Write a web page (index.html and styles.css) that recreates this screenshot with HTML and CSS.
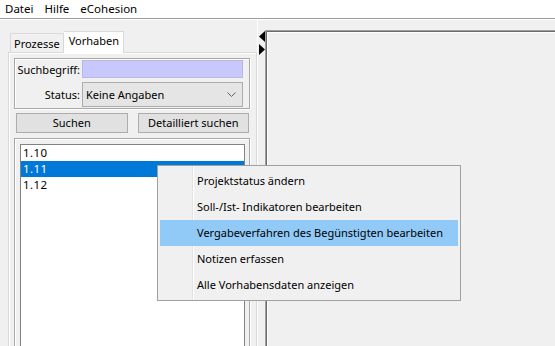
FILE: index.html
```html
<!DOCTYPE html>
<html lang="de">
<head>
    <meta charset="UTF-8">
    <title>eCohesion</title>
    <link rel="stylesheet" href="styles.css">
</head>
<body>
    <div class="menubar">
        <span>Datei</span>
        <span>Hilfe</span>
        <span>eCohesion</span>
    </div>
    <div class="main">
        <div class="left">
            <div class="tabs">
                <div class="tab">Prozesse</div>
                <div class="tab active">Vorhaben</div>
            </div>
            <div class="tabpanel">
                <div class="group search">
                    <label>Suchbegriff:</label>
                    <div class="input"></div>
                    <label>Status:</label>
                    <div class="combo">
                        <span>Keine Angaben</span>
                        <svg width="9" height="5" viewBox="0 0 9 5"><path d="M0.5 0.5 L4.5 4.5 L8.5 0.5" fill="none" stroke="#606060" stroke-width="1"/></svg>
                    </div>
                </div>
                <div class="buttons">
                    <div class="btn">Suchen</div>
                    <div class="btn">Detailliert suchen</div>
                </div>
                <div class="group listbox">
                    <div class="list">
                        <div class="row">1.10</div>
                        <div class="row selected">1.11</div>
                        <div class="row">1.12</div>
                    </div>
                </div>
            </div>
        </div>
        <div class="splitter">
            <svg width="6" height="11" viewBox="0 0 6 11"><polygon points="6,0 0,5.5 6,11" fill="#000"/></svg>
            <svg width="6" height="11" viewBox="0 0 6 11"><polygon points="0,0 6,5.5 0,11" fill="#000"/></svg>
        </div>
        <div class="right"></div>
    </div>

    <!-- Kontextmenü auf 1.11 -->
    <div class="context">
        <div class="item">Projektstatus ändern</div>
        <div class="item">Soll-/Ist- Indikatoren bearbeiten</div>
        <div class="item hover">Vergabeverfahren des Begünstigten bearbeiten</div>
        <div class="item">Notizen erfassen</div>
        <div class="item">Alle Vorhabensdaten anzeigen</div>
    </div>
</body>
</html>
```
FILE: styles.css
```css
body {
    margin: 0;
    background-color: #f0f0f0;
    font-family: "Noto Sans", "Open Sans", sans-serif;
    font-size: 11px;
    color: #000;
    overflow: hidden;
    height: 346px;
    white-space: nowrap;
}

/* Menüleiste */
.menubar {
    height: 18px;
    line-height: 17px;
    background-color: #fff;
    border-bottom: 1px solid #a0a0a0;
    display: flex;
    gap: 11px;
    padding-left: 5px;
    font-size: 11.5px;
}

.main {
    display: flex;
    border-top: 1px solid #fff;
    height: 326px;
}

/* linke Seite mit Reitern */
.left {
    width: 249px;
    padding: 11px 0 0 8px;
}

.tabs {
    display: flex;
    align-items: flex-end;
    height: 21px;
    padding-left: 2px;
    position: relative;
    z-index: 1;
}

.tab {
    height: 18px;
    line-height: 19px;
    padding: 0 3px 0 3px;
    border: 1px solid #d9d9d9;
    border-bottom: none;
    background-color: #f0f0f0;
}

.tab.active {
    height: 21px;
    line-height: 18px;
    background-color: #fff;
    margin-bottom: -1px;
    padding: 0 4px 0 5px;
    border-left: none;
}

.tabpanel {
    border: 1px solid #d9d9d9;
    border-bottom: none;
    box-shadow: inset 1px 1px 0 #fff;
    padding: 5px 6px 0 5px;
    height: 300px;
}

.group {
    border: 1px solid #a8a8a8;
    box-shadow: inset 1px 1px 0 #fff, 1px 1px 0 #fff;
}

.search {
    display: grid;
    grid-template-columns: 65px 1fr;
    column-gap: 2px;
    row-gap: 4px;
    padding: 1px 6px 1px 0;
    align-items: center;
}

.search label {
    text-align: right;
}

.input {
    height: 16px;
    background-color: #c8c8ff;
    border: 1px solid #b8b8e0;
}

.combo {
    height: 23px;
    background-color: #e5e5e5;
    border: 1px solid #adadad;
    display: flex;
    align-items: center;
    justify-content: space-between;
    padding: 0 6px 0 3px;
}

.buttons {
    display: flex;
    gap: 10px;
    padding: 0 1px 0 2px;
    margin: 4px 0 5px 0;
}

.btn {
    flex: 1;
    height: 18px;
    line-height: 18px;
    text-align: center;
    background-color: #e1e1e1;
    border: 1px solid #adadad;
}

.listbox {
    padding: 5px 4px 0 5px;
    height: 300px;
}

.list {
    background-color: #fff;
    border: 1px solid #828282;
    height: 300px;
}

.row {
    height: 16px;
    line-height: 16px;
    padding-left: 2px;
    letter-spacing: 0.4px;
    font-size: 11.5px;
}

.row.selected {
    background-color: #0078d7;
    color: #fff;
}

/* Teiler mit Pfeilen */
.splitter {
    border-left: 1px solid #fff;
    display: flex;
    flex-direction: column;
    gap: 2px;
    padding: 11px 0 0 1px;
    box-sizing: border-box;
    width: 8px;
}

.right {
    flex: 1;
    margin-top: 10px;
    border-top: 1px solid #a0a0a0;
    border-left: 1px solid #a0a0a0;
    box-shadow: inset 1px 1px 0 #696969, inset 2px 2px 0 #fff;
    background-color: #f0f0f0;
}

/* Kontextmenü */
.context {
    position: absolute;
    left: 157px;
    top: 165px;
    width: 298px;
    padding: 2px;
    border: 1px solid #a0a0a0;
    background-color: #f0f0f0;
    background-image: linear-gradient(to right, transparent 34px, #e3e3e3 34px, #e3e3e3 35px, #fff 35px, #fff 36px, transparent 36px);
    background-repeat: no-repeat;
}

.item {
    height: 26px;
    line-height: 26px;
    padding-left: 37px;
}

.item.hover {
    background-color: #91c9f7;
}
```
